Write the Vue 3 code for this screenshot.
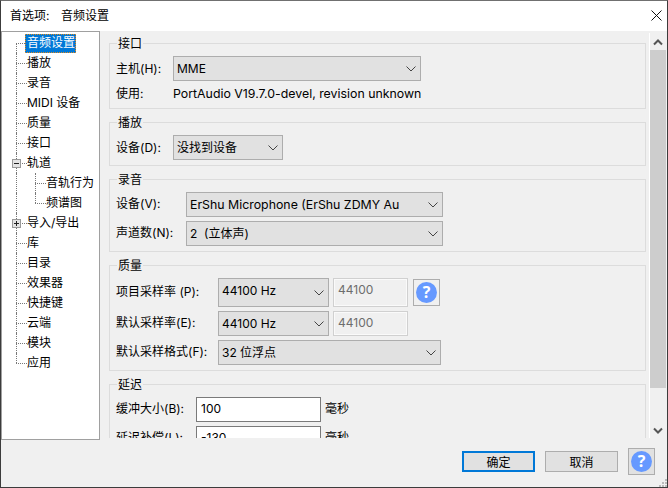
<script setup>
const tree = [
  { t: '音频设置', sel: true },
  { t: '播放' }, { t: '录音' }, { t: 'MIDI 设备' }, { t: '质量' }, { t: '接口' },
  { t: '轨道', exp: '-' },
  { t: '音轨行为', child: true },
  { t: '频谱图', child: true, lastChild: true },
  { t: '导入/导出', exp: '+' },
  { t: '库' }, { t: '目录' }, { t: '效果器' }, { t: '快捷键' }, { t: '云端' }, { t: '模块' },
  { t: '应用', last: true }
]
const channels = '2\u00a0\u00a0(立体声)'
</script>

<template>
  <div class="win">
    <header class="title">
      <span class="title-a">首选项:</span><span>音频设置</span>
      <svg class="close" width="11" height="11" viewBox="0 0 11 11"><path d="M0.5 0.5L10.5 10.5M10.5 0.5L0.5 10.5" stroke="#111" fill="none"/></svg>
    </header>
    <div class="main">
      <nav class="tree">
        <div v-for="n in tree" :key="n.t" class="row" :class="{ child: n.child, first: n.sel, last: n.last, lastc: n.lastChild }">
          <i class="trunk"></i>
          <i class="branch"></i>
          <i v-if="n.child" class="trunk2"></i>
          <b v-if="n.exp" class="exp">
            <svg width="9" height="9" viewBox="0 0 9 9"><path :d="n.exp === '+' ? 'M2 4.5H7M4.5 2V7' : 'M2 4.5H7'" stroke="#222" fill="none"/></svg>
          </b>
          <span class="label" :class="{ sel: n.sel }">{{ n.t }}</span>
        </div>
      </nav>
      <div class="panel">
        <div class="content">
          <section class="group g1">
            <div class="legend">接口</div>
            <div class="line"><label>主机(H):</label><div class="select w248"><span>MME</span><svg width="10" height="6" viewBox="0 0 10 6"><path d="M0.5 0.5L5 5L9.5 0.5" stroke="#444" fill="none"/></svg></div></div>
            <div class="line info"><label>使用:</label><span class="latin">PortAudio V19.7.0-devel, revision unknown</span></div>
          </section>
          <section class="group g1">
            <div class="legend">播放</div>
            <div class="line"><label>设备(D):</label><div class="select w110"><span>没找到设备</span><svg width="10" height="6" viewBox="0 0 10 6"><path d="M0.5 0.5L5 5L9.5 0.5" stroke="#444" fill="none"/></svg></div></div>
          </section>
          <section class="group g2">
            <div class="legend">录音</div>
            <div class="line"><label>设备(V):</label><div class="select w257"><span class="latin">ErShu Microphone (ErShu ZDMY Au</span><svg width="10" height="6" viewBox="0 0 10 6"><path d="M0.5 0.5L5 5L9.5 0.5" stroke="#444" fill="none"/></svg></div></div>
            <div class="line"><label>声道数(N):</label><div class="select w257"><span>{{ channels }}</span><svg width="10" height="6" viewBox="0 0 10 6"><path d="M0.5 0.5L5 5L9.5 0.5" stroke="#444" fill="none"/></svg></div></div>
          </section>
          <section class="group g3">
            <div class="legend">质量</div>
            <div class="line tall">
              <label>项目采样率 (P):</label>
              <div class="select w111 h29"><span>44100 Hz</span><svg width="10" height="6" viewBox="0 0 10 6"><path d="M0.5 0.5L5 5L9.5 0.5" stroke="#444" fill="none"/></svg></div>
              <div class="field h29">44100</div>
              <button class="help small"><span>?</span></button>
            </div>
            <div class="line">
              <label>默认采样率(E):</label>
              <div class="select w111"><span>44100 Hz</span><svg width="10" height="6" viewBox="0 0 10 6"><path d="M0.5 0.5L5 5L9.5 0.5" stroke="#444" fill="none"/></svg></div>
              <div class="field">44100</div>
            </div>
            <div class="line">
              <label>默认采样格式(F):</label>
              <div class="select w223"><span>32 位浮点</span><svg width="10" height="6" viewBox="0 0 10 6"><path d="M0.5 0.5L5 5L9.5 0.5" stroke="#444" fill="none"/></svg></div>
            </div>
          </section>
          <section class="group g4">
            <div class="legend">延迟</div>
            <div class="line"><label>缓冲大小(B):</label><div class="input">100</div><span class="unit">毫秒</span></div>
            <div class="line"><label>延迟补偿(L):</label><div class="input">-130</div><span class="unit">毫秒</span></div>
          </section>
        </div>
        <div class="scroll">
          <svg width="10" height="7" viewBox="0 0 10 7"><path d="M1 5.5L5 1.5L9 5.5" stroke="#555" stroke-width="2" fill="none"/></svg>
          <div class="thumb"></div>
          <svg width="10" height="7" viewBox="0 0 10 7"><path d="M1 1.5L5 5.5L9 1.5" stroke="#555" stroke-width="2" fill="none"/></svg>
        </div>
      </div>
    </div>
    <footer class="foot">
      <button class="btn primary">确定</button>
      <button class="btn">取消</button>
      <button class="help"><span>?</span></button>
      <svg class="grip" width="8" height="8" viewBox="0 0 8 8" fill="#bbb"><rect x="6" y="0" width="2" height="2"/><rect x="3" y="3" width="2" height="2"/><rect x="6" y="3" width="2" height="2"/><rect x="0" y="6" width="2" height="2"/><rect x="3" y="6" width="2" height="2"/><rect x="6" y="6" width="2" height="2"/></svg>
    </footer>
  </div>
</template>

<style>
html, body { margin: 0; padding: 0; }
</style>

<style scoped>
* { box-sizing: border-box; }
.win {
  width: 668px; height: 488px; display: flex; flex-direction: column; overflow: hidden;
  background: #f0f0f0; border: 1px solid #3c3c3c; border-top-color: #707070;
  font: 12px/16px Inter, "Noto Sans CJK SC", sans-serif; color: #000;
}
.latin { font-size: 12.35px; }
.title {
  height: 30px; flex: none; background: #fff; display: flex; align-items: center;
  padding: 0 0 0 9px; position: relative;
}
.title-a { width: 51px; }
.close { position: absolute; right: 5px; top: 9px; }
.main { flex: none; height: 409px; display: flex; }
.tree {
  width: 99px; height: 409px; flex: none; background: #fff; border: 1px solid #a0a0a0;
  padding-top: 1px;
}
.row { height: 20px; position: relative; }
.trunk { position: absolute; left: 14px; top: 0; height: 20px; border-left: 1px dotted #777; }
.first .trunk { top: 10px; height: 10px; }
.last .trunk { height: 10px; }
.branch { position: absolute; left: 14px; top: 10px; width: 11px; border-top: 1px dotted #777; }
.child .branch { left: 33px; }
.trunk2 { position: absolute; left: 33px; top: 0; height: 20px; border-left: 1px dotted #777; }
.lastc .trunk2 { height: 10px; }
.exp {
  position: absolute; left: 10px; top: 6px; width: 9px; height: 9px; display: block; line-height: 0;
  background: #e4e4e4; outline: 1px solid #999; outline-offset: -1px;
}
.label { position: absolute; left: 25px; top: 2px; height: 16px; white-space: nowrap; line-height: 16px; }
.child .label { left: 44px; }
.label.sel {
  top: 1px; left: 23px; height: 19px; padding: 0 2px; line-height: 17px; width: 51px;
  background: #0078d7; color: #fff; outline: 1px dotted #e08a1e; outline-offset: -1px;
}
.panel { flex: none; width: 565px; height: 405px; margin: 2px 0 0 2px; display: flex; overflow: hidden; }
.content { width: 546px; flex: none; padding: 10px 0 0 7px; display: flex; flex-direction: column; gap: 13px; overflow: hidden; height: 405px; }
.scroll { width: 17px; flex: none; margin-left: 1px; border-left: 1px solid #fff; display: flex; flex-direction: column; align-items: center; justify-content: space-between; padding: 6px 0 4px; position: relative; }
.thumb { position: absolute; left: 0; top: 17px; width: 16px; height: 338px; background: #cdcdcd; }
.group {
  width: 537px; flex: none; border: 1px solid #dcdcdc; padding: 12px 0 5px 6px; position: relative;
  display: flex; flex-direction: column; gap: 4px;
}
.legend { position: absolute; left: 7px; top: -8px; background: #f0f0f0; padding: 0 1px; height: 16px; }
.line { display: flex; align-items: center; height: 25px; flex: none; }
.line.tall { height: 29px; }
.line.info { height: 16px; margin-bottom: 2px; }
.line.info span, .line.info label { position: relative; top: 1px; }
.g1 label { width: 57px; }
.g2 label { width: 70px; padding-bottom: 2px; }
.g3 label { width: 102px; padding-bottom: 2px; }
.g4 label { width: 80px; padding-bottom: 2px; }
label { flex: none; white-space: nowrap; }
.select {
  height: 25px; background: #e1e1e1; border: 1px solid #adadad; display: flex; align-items: center;
  justify-content: space-between; padding: 0 4px 0 3px; flex: none; white-space: nowrap;
}
.select.h29 { height: 29px; padding-bottom: 3px; }
.field.h29 { height: 29px; }
.select.h29 svg { margin-top: 3px; }
.w248 { width: 248px; } .w110 { width: 110px; } .w257 { width: 257px; } .w111 { width: 111px; } .w223 { width: 223px; }
.field {
  width: 75px; height: 25px; margin-left: 4px; border: 1px solid #d0d0d0; box-shadow: inset 0 0 0 1px #fafafa; background: #f0f0f0; color: #6d6d6d;
  display: flex; align-items: flex-start; padding: 3px 0 0 4px; flex: none;
}
.input { width: 125px; height: 25px; border: 1px solid #7a7a7a; background: #fff; display: flex; align-items: center; padding: 0 0 2px 4px; flex: none; }
.unit { margin-left: 4px; padding-bottom: 2px; }
.help {
  width: 27px; height: 27px; padding: 0; border: 1px solid #adadad; background: #e1e1e1; display: flex; align-items: center; justify-content: center; flex: none;
}
.help span {
  width: 21px; height: 21px; border-radius: 50%; background: #6699ff; color: #fff; font: bold 16px/21px "Open Sans", sans-serif; text-align: center; display: block;
}
.help.small { margin-left: 5px; background: #f0f0f0; }
.foot { flex: 1; display: flex; align-items: flex-start; padding: 11px 0 0 461px; position: relative; }
.btn {
  width: 73px; height: 21px; padding: 1px 0 0; border: 1px solid #adadad; background: #e1e1e1; font: inherit; color: #000; margin-right: 10px; line-height: 17px;
}
.btn.primary { border: 2px solid #0078d7; }
.foot .help { margin: -3px 0 0 0; }
.grip { position: absolute; right: 0; bottom: 0; }
</style>
